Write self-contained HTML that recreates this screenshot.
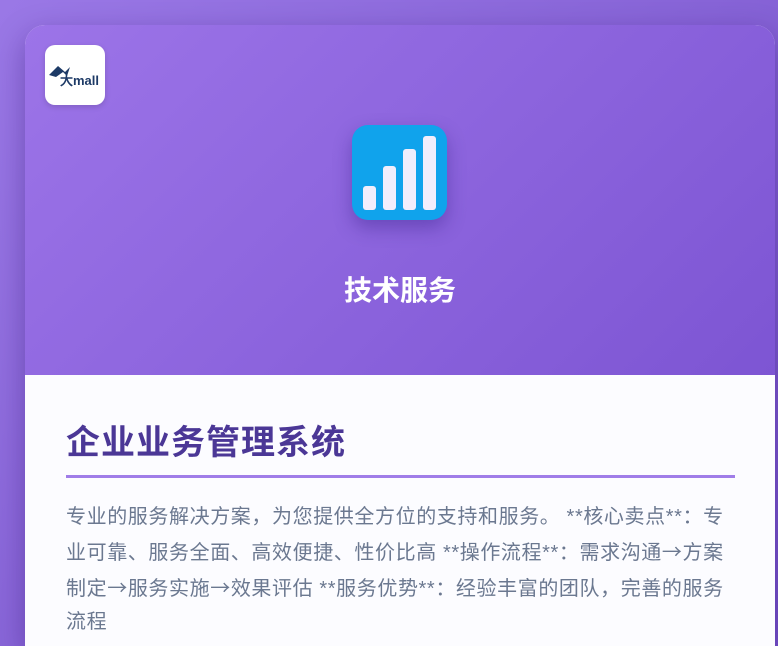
<!DOCTYPE html>
<html><head><meta charset="utf-8"><style>
*{margin:0;padding:0;box-sizing:border-box}
html,body{width:778px;height:646px;overflow:hidden}
body{background:linear-gradient(135deg,#9a78e6,#7450c8);font-family:"Liberation Sans","Noto Sans CJK SC",sans-serif;position:relative}
.card{position:absolute;left:25px;top:25px;width:750px;height:621px;border-radius:20px 20px 0 0;overflow:hidden;box-shadow:0 10px 30px rgba(40,10,100,.35);background:#fcfcff}
.head{height:350px;background:linear-gradient(135deg,#9c74e8,#7d55d3);position:relative}
.logo{position:absolute;left:20px;top:20px;width:60px;height:60px;background:#fff;border-radius:10px;box-shadow:0 2px 6px rgba(0,0,0,.15)}
.icon{position:absolute;left:327px;top:100px;width:95px;height:95px;border-radius:16px;background:#10a3ec;box-shadow:0 8px 18px rgba(40,20,120,.35)}
.bar{position:absolute;bottom:10px;width:13px;background:#f1eefc;border-radius:3px}
.ht{position:absolute;left:0;right:0;top:244px;text-align:center;color:#fff;font-size:28px;font-weight:bold}
h1{position:absolute;left:66px;top:415px;font-size:34px;color:#4b3796;font-weight:bold;letter-spacing:1px}
.line{position:absolute;left:66px;top:475px;width:669px;height:3px;background:#a07de8}
p{position:absolute;left:66px;top:501px;width:674px;font-size:20px;line-height:33px;color:#6b7890;letter-spacing:0.6px}
.a{font-family:"Noto Sans CJK SC",sans-serif}
</style></head><body>
<div class="card">
<div class="head">
<div class="logo"><svg width="60" height="60" viewBox="0 0 60 60"><path d="M4 30 L13 21 L20 27 L25 22 L22 31 L18 27 L11 32 Z" fill="#1d3a66"/><text x="15" y="40" font-family="Liberation Sans,sans-serif" font-weight="bold" font-size="13" fill="#1d3a66">大mall</text></svg></div>
<div class="icon">
<div class="bar" style="left:11px;height:24px"></div>
<div class="bar" style="left:31px;height:44px"></div>
<div class="bar" style="left:51px;height:61px"></div>
<div class="bar" style="left:71px;height:74px"></div>
</div>
<div class="ht">技术服务</div>
</div>
</div>
<h1>企业业务管理系统</h1>
<div class="line"></div>
<p>专业的服务解决方案，为您提供全方位的支持和服务。 **核心卖点**：专业可靠、服务全面、高效便捷、性价比高 **操作流程**：需求沟通<span class="a">→</span>方案制定<span class="a">→</span>服务实施<span class="a">→</span>效果评估 **服务优势**：经验丰富的团队，完善的服务流程</p>
</body></html>
